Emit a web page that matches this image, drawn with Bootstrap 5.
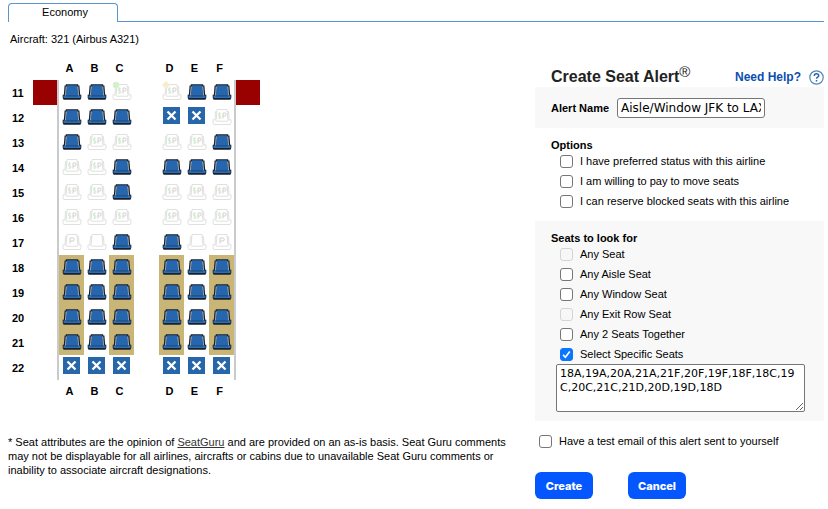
<!DOCTYPE html>
<html lang="en">
<head>
<meta charset="utf-8">
<meta name="viewport" content="width=device-width, initial-scale=1">
<title>Create Seat Alert</title>
<link href="https://cdn.jsdelivr.net/npm/bootstrap@5.3.0/dist/css/bootstrap.min.css" rel="stylesheet">
<style>
body{font-family:"Liberation Sans",Arial,sans-serif;font-size:11px;line-height:14px;color:#000;background:#fff;padding:3px 4px 8px 8px}
.cabin-tabs{border-bottom:1px solid #5b94ce}
.cabin-tabs .nav-link{width:110px;height:19px;padding:1px 0 0 4px;color:#000;text-align:center;border:1px solid #5b94ce;border-bottom:0;border-radius:4px 4px 0 0;background:#fff;margin-bottom:-1px}
.aircraft{margin:10px 0 0 2px}
.seat-map{table-layout:fixed;width:252px;margin:10px 0 0;font-size:11px;line-height:14px;border-collapse:separate;border-spacing:0}
.seat-map th,.seat-map td{padding:0;height:25px;text-align:center;vertical-align:middle;line-height:0}
.seat-map th{font-weight:700;line-height:14px}
.seat-map thead th,.seat-map tfoot th{padding-right:4px}
.seat-map thead th{height:24px}
.seat-map tfoot th{height:22px}
.seat-map tbody th{text-align:left;padding-left:4px}
.seat-map .c-num{width:25px}
.seat-map .c-wing{width:26px}
.seat-map .wall-l{border-right:2px solid #c9cacc}
.seat-map .wall-r{border-left:2px solid #c9cacc}
.exit-door{background:#990000;background-clip:padding-box}
.picked{background:#c9b676}
.seat-map svg{width:25px;height:25px;display:block}
.footnote{margin-top:33px;line-height:14px}
.footnote a{color:#333}
.alert-pane{flex:0 0 289px;padding-top:45px}
.pane-title{font-size:16px;line-height:20px;font-weight:700;color:#222;margin:0}
.pane-title sup{font-size:15px;font-weight:400;line-height:0;top:-5px;vertical-align:baseline;position:relative}
.help-link{font-size:12px;font-weight:700;color:#0a4fae;text-decoration:none}
.help-link svg{width:15px;height:15px}
.tinted{background:#f8f8f8}
.name-row{padding:11px 16px 10px}
.group-title{font-size:11px;line-height:12px;font-weight:700;margin:0}
.name-box{font:12px/14px "DejaVu Sans",Verdana,sans-serif;width:148px;height:20px;padding:0 3px;border:1px solid #767676;border-radius:3px;color:#000;background:#fff}
.seat-list{font:11px/14px "DejaVu Sans",Verdana,sans-serif;width:249px;height:48px;padding:2px 3px;border:1px solid #767676;border-radius:2px;color:#000;background:#fff;margin-left:5px}
.opt{display:flex;align-items:center;height:20px;min-height:0;margin:0;padding:0 0 0 9px;gap:7px}
.opt .form-check-input{float:none;flex:none;width:13px;height:13px;margin:0;border:1px solid #767676;border-radius:3px;background-color:#fff}
.opt .form-check-input:checked{background-color:#0a75ff;border-color:#0a75ff;background-image:url("data:image/svg+xml,%3csvg xmlns='http://www.w3.org/2000/svg' viewBox='0 0 13 13'%3e%3cpath fill='none' stroke='%23fff' stroke-width='2' d='m2.500 7 2.700 2.800L10.300 3'/%3e%3c/svg%3e")}
.opt .form-check-input:disabled{border-color:#d4d4d4;background-color:#f7f7f7;opacity:1}
.opt .form-check-label,.opt .form-check-input:disabled~.form-check-label{opacity:1}
.pick-group{padding:11px 16px 9px}
.opts-group{padding:11px 16px 10px}
.test-mail{padding-left:4px;margin-top:10px}
.actions{gap:35px;margin-top:21px}
.cta{font:800 11px/14px Inter,sans-serif;height:27px;padding:0;width:58px;background:#0457ff;border:0;border-radius:6px;color:#fff}
</style>
<script src="https://cdn.jsdelivr.net/npm/bootstrap@5.3.0/dist/js/bootstrap.bundle.min.js"></script>
</head>
<body>
<svg class="d-none" aria-hidden="true">
<symbol id="taken" viewBox="0 0 25 25"><path d="M6.800 5.500V4.200h12.400v1.300h1.200l.8 9.200h1.100v3.400l-.9 1.700H4.600l-.9-1.700v-3.400h1.100l.8-9.200z" fill="#17202c"/><path d="M6.700 6.500h1.300l-.7 9H6zM18 6.500h1.300l.7 9h-1.300z" fill="#aab3bb"/><path d="M8 5.200h10l1.100 10.600H6.900z" fill="#2666ae"/><path d="M4.500 15.500h2l.6.800h11.800l.6-.8h2V18H4.500z" fill="#2d6fb7"/></symbol>
<symbol id="open" viewBox="0 0 25 25"><path d="M7.200 14.500 8 4.500h10l.8 10M6 14.500l.5-8h1.300M20 14.500l-.5-8h-1.300M4 14.800h2.800l.7 1.400h11l.7-1.400H22v3l-.8 1.700H4.800L4 17.800z" fill="#fff" stroke="#e0e0e0"/></symbol>
<symbol id="open-p" viewBox="0 0 25 25"><use href="#open"/><path d="M11 13.500V8h3q1.300 0 1.300 1.500T14 11h-3" fill="none" stroke="#d0d0d0"/></symbol>
<symbol id="open-sp" viewBox="0 0 25 25"><use href="#open"/><path d="M14 13.500V8h2q1 0 1 1.500t-1 1.500h-2" fill="none" stroke="#d6cfcf"/><path d="M11.800 8.500H9.500v2.300h2.300V13H9.300M10.600 7v7" fill="none" stroke="#d3ead3" stroke-width=".9"/></symbol>
<symbol id="open-good" viewBox="0 0 25 25"><use href="#open-sp"/><circle cx="7" cy="5" r="3.200" fill="#d3f0cc"/></symbol>
<symbol id="open-mixed" viewBox="0 0 25 25"><use href="#open-sp"/><path d="M7 1 11 5 7 9 3 5z" fill="#f7eccb"/></symbol>
<symbol id="blocked" viewBox="0 0 25 25"><path d="M4 2h17v17H4z" fill="#2666a9"/><path d="m8.500 6.500 8 8m0-8-8 8" stroke="#fff" stroke-width="2.300"/></symbol>
</svg>

<ul class="nav cabin-tabs"><li class="nav-item"><a class="nav-link active" href="#cabin">Economy</a></li></ul>

<main class="d-flex align-items-start gap-2" id="cabin">
<section class="flex-fill">
<p class="aircraft">Aircraft: 321 (Airbus A321)</p>
<table class="seat-map">
<colgroup><col class="c-num"><col class="c-wing"><col span="7"><col class="c-wing"></colgroup>
<thead><tr><th></th><th></th><th>A</th><th>B</th><th>C</th><th></th><th>D</th><th>E</th><th>F</th><th></th></tr></thead>
<tbody>
<tr><th>11</th><td class="wall-l exit-door"></td><td><svg><use href="#taken"/></svg></td><td><svg><use href="#taken"/></svg></td><td><svg><use href="#open-good"/></svg></td><td></td><td><svg><use href="#open-mixed"/></svg></td><td><svg><use href="#taken"/></svg></td><td><svg><use href="#taken"/></svg></td><td class="wall-r exit-door"></td></tr>
<tr><th>12</th><td class="wall-l"></td><td><svg><use href="#taken"/></svg></td><td><svg><use href="#taken"/></svg></td><td><svg><use href="#taken"/></svg></td><td></td><td><svg><use href="#blocked"/></svg></td><td><svg><use href="#blocked"/></svg></td><td><svg><use href="#open-sp"/></svg></td><td class="wall-r"></td></tr>
<tr><th>13</th><td class="wall-l"></td><td><svg><use href="#taken"/></svg></td><td><svg><use href="#open-sp"/></svg></td><td><svg><use href="#open-sp"/></svg></td><td></td><td><svg><use href="#open-sp"/></svg></td><td><svg><use href="#open-sp"/></svg></td><td><svg><use href="#taken"/></svg></td><td class="wall-r"></td></tr>
<tr><th>14</th><td class="wall-l"></td><td><svg><use href="#open-sp"/></svg></td><td><svg><use href="#open-sp"/></svg></td><td><svg><use href="#taken"/></svg></td><td></td><td><svg><use href="#taken"/></svg></td><td><svg><use href="#taken"/></svg></td><td><svg><use href="#taken"/></svg></td><td class="wall-r"></td></tr>
<tr><th>15</th><td class="wall-l"></td><td><svg><use href="#open-sp"/></svg></td><td><svg><use href="#open-sp"/></svg></td><td><svg><use href="#taken"/></svg></td><td></td><td><svg><use href="#open-sp"/></svg></td><td><svg><use href="#open-sp"/></svg></td><td><svg><use href="#open-sp"/></svg></td><td class="wall-r"></td></tr>
<tr><th>16</th><td class="wall-l"></td><td><svg><use href="#open-sp"/></svg></td><td><svg><use href="#open-sp"/></svg></td><td><svg><use href="#open-sp"/></svg></td><td></td><td><svg><use href="#open-sp"/></svg></td><td><svg><use href="#open-sp"/></svg></td><td><svg><use href="#open-sp"/></svg></td><td class="wall-r"></td></tr>
<tr><th>17</th><td class="wall-l"></td><td><svg><use href="#open-p"/></svg></td><td><svg><use href="#open"/></svg></td><td><svg><use href="#taken"/></svg></td><td></td><td><svg><use href="#taken"/></svg></td><td><svg><use href="#open"/></svg></td><td><svg><use href="#open-p"/></svg></td><td class="wall-r"></td></tr>
<tr><th>18</th><td class="wall-l"></td><td class="picked"><svg><use href="#taken"/></svg></td><td><svg><use href="#taken"/></svg></td><td class="picked"><svg><use href="#taken"/></svg></td><td></td><td class="picked"><svg><use href="#taken"/></svg></td><td><svg><use href="#taken"/></svg></td><td class="picked"><svg><use href="#taken"/></svg></td><td class="wall-r"></td></tr>
<tr><th>19</th><td class="wall-l"></td><td class="picked"><svg><use href="#taken"/></svg></td><td><svg><use href="#taken"/></svg></td><td class="picked"><svg><use href="#taken"/></svg></td><td></td><td class="picked"><svg><use href="#taken"/></svg></td><td><svg><use href="#taken"/></svg></td><td class="picked"><svg><use href="#taken"/></svg></td><td class="wall-r"></td></tr>
<tr><th>20</th><td class="wall-l"></td><td class="picked"><svg><use href="#taken"/></svg></td><td><svg><use href="#taken"/></svg></td><td class="picked"><svg><use href="#taken"/></svg></td><td></td><td class="picked"><svg><use href="#taken"/></svg></td><td><svg><use href="#taken"/></svg></td><td class="picked"><svg><use href="#taken"/></svg></td><td class="wall-r"></td></tr>
<tr><th>21</th><td class="wall-l"></td><td class="picked"><svg><use href="#taken"/></svg></td><td><svg><use href="#taken"/></svg></td><td class="picked"><svg><use href="#taken"/></svg></td><td></td><td class="picked"><svg><use href="#taken"/></svg></td><td><svg><use href="#taken"/></svg></td><td class="picked"><svg><use href="#taken"/></svg></td><td class="wall-r"></td></tr>
<tr><th>22</th><td class="wall-l"></td><td><svg><use href="#blocked"/></svg></td><td><svg><use href="#blocked"/></svg></td><td><svg><use href="#blocked"/></svg></td><td></td><td><svg><use href="#blocked"/></svg></td><td><svg><use href="#blocked"/></svg></td><td><svg><use href="#blocked"/></svg></td><td class="wall-r"></td></tr>
</tbody>
<tfoot><tr><th></th><th></th><th>A</th><th>B</th><th>C</th><th></th><th>D</th><th>E</th><th>F</th><th></th></tr></tfoot>
</table>
<p class="footnote mb-0">* Seat attributes are the opinion of <a href="#seatguru">SeatGuru</a> and are provided on an as-is basis. Seat Guru comments may not be displayable for all airlines, aircrafts or cabins due to unavailable Seat Guru comments or inability to associate aircraft designations.</p>
</section>

<form class="alert-pane">
<div class="d-flex justify-content-between align-items-center ps-3">
<h1 class="pane-title">Create Seat Alert<sup>®</sup></h1>
<a class="help-link d-flex align-items-center gap-2" href="#help">Need Help? <svg viewBox="0 0 15 15" fill="none" stroke="#5285b5" aria-hidden="true"><circle cx="7.500" cy="7.500" r="6.700" stroke-width="1.200"/><path d="M5.300 6q0-2.200 2.200-2.200T9.700 5.700q0 .9-1.100 1.500T7.500 8.800M7.500 10v1.500" stroke="#2865ac" stroke-width="1.500"/></svg></a>
</div>
<div class="tinted name-row d-flex align-items-center gap-2">
<label class="group-title" for="alertName">Alert Name</label>
<input class="name-box" id="alertName" type="text" value="Aisle/Window JFK to LAX">
</div>
<fieldset class="opts-group">
<legend class="group-title">Options</legend>
<div class="opt form-check"><input class="form-check-input" type="checkbox" id="o1"><label class="form-check-label" for="o1">I have preferred status with this airline</label></div>
<div class="opt form-check"><input class="form-check-input" type="checkbox" id="o2"><label class="form-check-label" for="o2">I am willing to pay to move seats</label></div>
<div class="opt form-check"><input class="form-check-input" type="checkbox" id="o3"><label class="form-check-label" for="o3">I can reserve blocked seats with this airline</label></div>
</fieldset>
<fieldset class="tinted pick-group">
<legend class="group-title">Seats to look for</legend>
<div class="opt form-check"><input class="form-check-input" type="checkbox" id="s1" disabled><label class="form-check-label" for="s1">Any Seat</label></div>
<div class="opt form-check"><input class="form-check-input" type="checkbox" id="s2"><label class="form-check-label" for="s2">Any Aisle Seat</label></div>
<div class="opt form-check"><input class="form-check-input" type="checkbox" id="s3"><label class="form-check-label" for="s3">Any Window Seat</label></div>
<div class="opt form-check"><input class="form-check-input" type="checkbox" id="s4" disabled><label class="form-check-label" for="s4">Any Exit Row Seat</label></div>
<div class="opt form-check"><input class="form-check-input" type="checkbox" id="s5"><label class="form-check-label" for="s5">Any 2 Seats Together</label></div>
<div class="opt form-check"><input class="form-check-input" type="checkbox" id="s6" checked><label class="form-check-label" for="s6">Select Specific Seats</label></div>
<textarea class="seat-list d-block" aria-label="Specific seats">18A,19A,20A,21A,21F,20F,19F,18F,18C,19C,20C,21C,21D,20D,19D,18D</textarea>
</fieldset>
<div class="opt form-check test-mail"><input class="form-check-input" type="checkbox" id="mail"><label class="form-check-label" for="mail">Have a test email of this alert sent to yourself</label></div>
<div class="actions d-flex"><button class="btn cta" type="submit">Create</button><button class="btn cta" type="button">Cancel</button></div>
</form>
</main>
</body>
</html>
